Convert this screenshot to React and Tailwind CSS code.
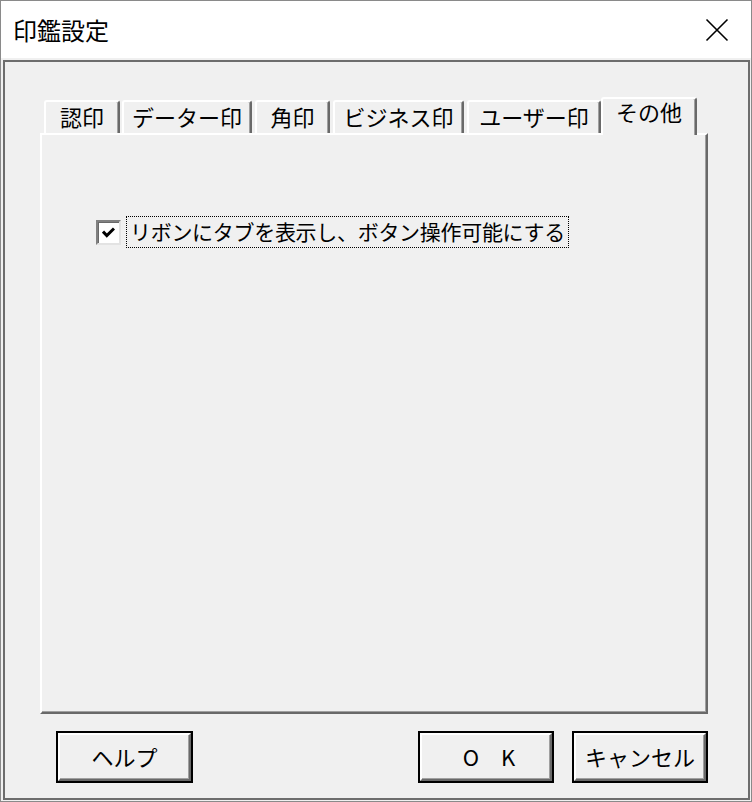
import React from "react";

const tabs = [
  { label: "認印", cls: "w-[76px] ml-[4px]" },
  { label: "データー印", cls: "w-[130px] ml-[2px]" },
  { label: "角印", cls: "w-[75px] ml-[3px]" },
  { label: "ビジネス印", cls: "w-[131px] ml-[3px]" },
  { label: "ユーザー印", cls: "w-[134px] ml-[3px]" },
];

function Tab({ label, className }) {
  return (
    <div
      className={
        "h-[33px] flex items-center justify-center rounded-t-[3px] border-t-2 border-l-2 border-r-2 border-t-white border-l-white border-r-[#696969] shadow-[inset_-1px_0_0_#a0a0a0] text-[22px] leading-none text-black " +
        className
      }
    >
      <span className="-mt-[4px]">{label}</span>
    </div>
  );
}

function Button({ children, className }) {
  return (
    <button
      className={
        "h-[52px] border-2 border-black bg-[#f0f0f0] p-0 " + className
      }
    >
      <div className="h-full w-full flex items-center justify-center border-t-2 border-l-2 border-t-white border-l-white border-b-2 border-r-2 border-b-[#696969] border-r-[#696969] shadow-[inset_-1px_-1px_0_#a0a0a0] text-[22px] leading-none text-black">
        <span className="-mt-[3px]">{children}</span>
      </div>
    </button>
  );
}

export default function App() {
  return (
    <div className="w-[752px] h-[802px] border border-[#8a8a8a] bg-white flex flex-col font-['Noto_Sans_CJK_JP',sans-serif] overflow-hidden">
      {/* title bar */}
      <div className="h-[57px] flex items-center justify-between pl-[12px] pr-[22px] bg-white">
        <span className="text-[24px] leading-none text-black">印鑑設定</span>
        <svg width="24" height="24" viewBox="0 0 24 24" className="mt-[1px]">
          <path d="M1.5 1.5 L22.5 22.5 M22.5 1.5 L1.5 22.5" stroke="#000" strokeWidth="1.6" fill="none" />
        </svg>
      </div>

      {/* client */}
      <div className="flex-1 bg-[#f0f0f0] pt-[2px] pl-[2px] pr-[1px] pb-[1px] flex">
        <div className="flex-1 border-2 border-[#6d6d6d] pt-[35px] pl-[35px] flex flex-col">
          {/* tab strip */}
          <div className="h-[36px] flex items-end">
            {tabs.map((t) => (
              <Tab key={t.label} label={t.label} className={t.cls} />
            ))}
            <div className="relative z-10 w-[96px] h-[38px] -mb-[2px] flex items-start justify-center pt-[1px] rounded-t-[3px] border-t-2 border-l-2 border-r-2 border-t-white border-l-white border-r-[#696969] shadow-[inset_-1px_0_0_#a0a0a0] bg-[#f0f0f0] text-[22px] leading-none text-black">
              <span>その他</span>
            </div>
          </div>

          {/* panel */}
          <div className="w-[668px] h-[581px] border-t-2 border-l-2 border-t-white border-l-white border-r-2 border-b-2 border-r-[#696969] border-b-[#696969] shadow-[inset_-1px_-1px_0_#a0a0a0] pl-[54px] pt-[81px]">
            <div className="flex items-center gap-[5px]">
              <div className="w-[25px] h-[25px] border-t-2 border-l-2 border-t-[#808080] border-l-[#808080] border-r-2 border-b-2 border-r-[#e3e3e3] border-b-[#e3e3e3] bg-white shadow-[inset_1px_1px_0_#696969] flex items-center justify-center">
                <svg width="13" height="11" viewBox="0 0 13 11">
                  <path d="M1 4.5 L4.8 8.5 L12 1.5" stroke="#000" strokeWidth="3" fill="none" />
                </svg>
              </div>
              <div className="h-[32px] px-[3px] flex items-center border border-dotted border-black text-[21px] leading-none text-black tracking-[-0.3px]">
                <span className="-mt-[2px]">リボンにタブを表示し、ボタン操作可能にする</span>
              </div>
            </div>
          </div>

          {/* buttons */}
          <div className="w-[668px] flex mt-[17px] pl-[16px]">
            <Button className="w-[137px]">ヘルプ</Button>
            <div className="ml-auto flex gap-[18px]">
              <Button className="w-[136px]">
                <span className="pl-[6px]">O　K</span>
              </Button>
              <Button className="w-[136px]">キャンセル</Button>
            </div>
          </div>
        </div>
      </div>
    </div>
  );
}
